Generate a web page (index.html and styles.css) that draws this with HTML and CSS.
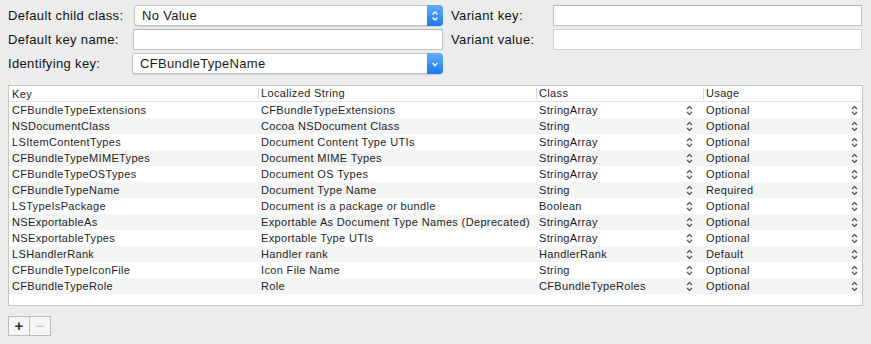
FILE: index.html
```html
<!DOCTYPE html>
<html lang="en">
<head>
    <meta charset="UTF-8">
    <title>Document Types</title>
    <link rel="stylesheet" href="styles.css">
</head>
<body>
    <div class="form">
        <label class="lbl">Default child class:</label>
        <div class="popup">
            <span>No Value</span>
            <span class="popup-btn">
                <svg width="8" height="12" viewBox="0 0 8 12"><path d="M1.5 4.5 L4 2 L6.5 4.5 M1.5 7.5 L4 10 L6.5 7.5" fill="none" stroke="#fff" stroke-width="1.3"/></svg>
            </span>
        </div>
        <label class="lbl lbl-right">Variant key:</label>
        <input class="field" type="text">

        <label class="lbl">Default key name:</label>
        <input class="field" type="text">
        <label class="lbl lbl-right">Variant value:</label>
        <input class="field field-light" type="text">

        <label class="lbl">Identifying key:</label>
        <div class="popup popup-pull">
            <span>CFBundleTypeName</span>
            <span class="popup-btn">
                <svg width="8" height="12" viewBox="0 0 8 12"><path d="M1.5 5 L4 7.5 L6.5 5" fill="none" stroke="#fff" stroke-width="1.3"/></svg>
            </span>
        </div>
    </div>

    <div class="table">
        <div class="row head">
            <div class="cell">Key</div>
            <div class="cell sep">Localized String</div>
            <div class="cell sep">Class</div>
            <div class="cell sep">Usage</div>
        </div>
        <div id="rows"></div>
    </div>

    <div class="buttons">
        <button class="seg">+</button><button class="seg off">&minus;</button>
    </div>

    <script>
        const rows = [
            ['CFBundleTypeExtensions', 'CFBundleTypeExtensions', 'StringArray', 'Optional'],
            ['NSDocumentClass', 'Cocoa NSDocument Class', 'String', 'Optional'],
            ['LSItemContentTypes', 'Document Content Type UTIs', 'StringArray', 'Optional'],
            ['CFBundleTypeMIMETypes', 'Document MIME Types', 'StringArray', 'Optional'],
            ['CFBundleTypeOSTypes', 'Document OS Types', 'StringArray', 'Optional'],
            ['CFBundleTypeName', 'Document Type Name', 'String', 'Required'],
            ['LSTypeIsPackage', 'Document is a package or bundle', 'Boolean', 'Optional'],
            ['NSExportableAs', 'Exportable As Document Type Names (Deprecated)', 'StringArray', 'Optional'],
            ['NSExportableTypes', 'Exportable Type UTIs', 'StringArray', 'Optional'],
            ['LSHandlerRank', 'Handler rank', 'HandlerRank', 'Default'],
            ['CFBundleTypeIconFile', 'Icon File Name', 'String', 'Optional'],
            ['CFBundleTypeRole', 'Role', 'CFBundleTypeRoles', 'Optional']
        ];

        const stepper = '<svg class="step" width="7" height="11" viewBox="0 0 7 11"><path d="M1 4 L3.5 1.5 L6 4 M1 7 L3.5 9.5 L6 7" fill="none" stroke="#4a4a4a" stroke-width="1.1"/></svg>';

        const box = document.getElementById('rows');
        rows.forEach(r => {
            const row = document.createElement('div');
            row.className = 'row';
            row.innerHTML =
                `<div class="cell">${r[0]}</div>` +
                `<div class="cell">${r[1]}</div>` +
                `<div class="cell pick"><span>${r[2]}</span>${stepper}</div>` +
                `<div class="cell pick last"><span>${r[3]}</span>${stepper}</div>`;
            box.appendChild(row);
        });
    </script>
</body>
</html>
```

FILE: styles.css
```css
body {
    margin: 0;
    background-color: #ececec;
    font-family: "Liberation Sans", Arial, sans-serif;
    color: #1a1a1a;
    width: 871px;
    height: 344px;
    overflow: hidden;
}
.form {
    display: grid;
    grid-template-columns: 125px 310px 110px 309px;
    grid-template-rows: 21px 21px 21px;
    row-gap: 3px;
    padding: 5px 0 0 8px;
}
.lbl {
    font-size: 13px;
    letter-spacing: 0.35px;
    display: flex;
    align-items: center;
    color: #111;
}
.lbl-right {
    margin-left: 8px;
}
.field {
    box-sizing: border-box;
    height: 21px;
    margin: 0;
    border: 1px solid #c2c2c2;
    border-top-color: #b4b4b4;
    background: white;
    outline: none;
}
.field-light {
    border-color: #d2d2d2;
}
.popup {
    box-sizing: border-box;
    height: 21px;
    display: flex;
    align-items: center;
    justify-content: space-between;
    background: white;
    border: 1px solid #c4c4c4;
    border-radius: 4px;
    box-shadow: 0 1px 1px rgba(0,0,0,0.12);
    font-size: 13px;
    letter-spacing: 0.3px;
    padding-left: 7px;
    margin-left: 1px;
}
.popup-pull {
    margin-left: -1px;
    border-radius: 3px;
}
.popup-btn {
    width: 16px;
    height: 21px;
    margin-right: -1px;
    background: linear-gradient(#64acfd, #1a7af2);
    border-radius: 0 4px 4px 0;
    display: flex;
    align-items: center;
    justify-content: center;
}
.table {
    margin: 11px 0 0 8px;
    width: 855px;
    height: 221px;
    box-sizing: border-box;
    border: 1px solid #c6c6c6;
    background: white;
    font-size: 11px;
    letter-spacing: 0.35px;
}
.row {
    display: grid;
    grid-template-columns: 249px 278px 167px 1fr;
    height: 16px;
    align-items: center;
}
#rows .row:nth-child(even) {
    background-color: #f4f5f5;
}
.head {
    height: 15px;
    border-bottom: 1px solid #e3e3e3;
}
.cell {
    padding-left: 3px;
    white-space: nowrap;
    overflow: hidden;
    color: #1e1e1e;
}
.sep {
    border-left: 1px solid #d8d8d8;
    line-height: 11px;
    padding-left: 2px;
}
.pick {
    display: flex;
    align-items: center;
    justify-content: space-between;
    padding-right: 10px;
}
.pick.last {
    padding-right: 4px;
}
.step {
    flex: none;
}
.buttons {
    display: flex;
    margin: 10px 0 0 8px;
}
.seg {
    box-sizing: border-box;
    width: 22px;
    height: 20px;
    margin: 0;
    padding: 0;
    border: 1px solid #bcbcbc;
    background: #f6f6f6;
    font-family: "Liberation Sans", Arial, sans-serif;
    font-size: 15px;
    font-weight: bold;
    line-height: 16px;
    color: #333;
}
.seg.off {
    width: 21px;
    border-left: none;
    color: #c6c6c6;
    font-weight: normal;
}
```
